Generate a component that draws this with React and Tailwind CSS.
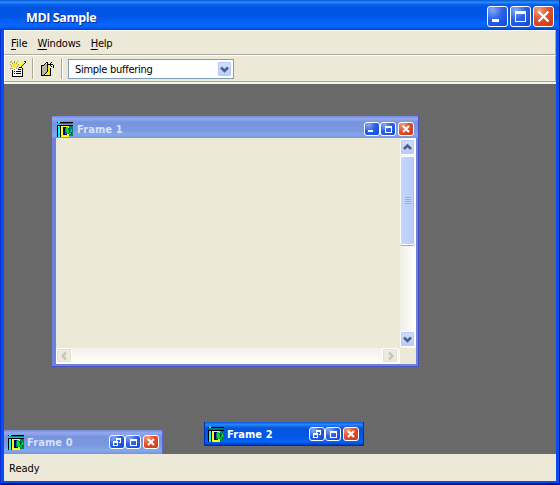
import React from "react";

const sizes = {
  main: "w-[21px] h-[21px] rounded-[3px]",
  child: "w-4 h-[14px] rounded-[3px]",
};

function CaptionButton({ kind, size = "child" }) {
  const color =
    kind === "close"
      ? "bg-[radial-gradient(circle_at_25%_15%,#f0a080,#e2512c_45%,#c43a16)]"
      : "bg-[radial-gradient(circle_at_25%_15%,#86a8f6,#2c62e6_45%,#0f48d8)]";
  const main = size === "main";
  return (
    <button className={`${sizes[size]} ${color} border border-white flex items-center justify-center shrink-0`}>
      {main ? (
        <svg width="19" height="19" viewBox="0 0 19 19" fill="none" stroke="#fff" className="shrink-0" shapeRendering={kind === "close" ? "auto" : "crispEdges"}>
          {kind === "min" && <path d="M4 13.5h7" strokeWidth="3" />}
          {kind === "max" && <><path d="M4.5 5v9.500h10V5" /><path d="M4 5.500h11" strokeWidth="3" /></>}
          {kind === "close" && <path d="M4.500 4.500l10 10M14.500 4.500l-10 10" strokeWidth="2.300" />}
        </svg>
      ) : (
        <svg width="14" height="12" viewBox="0 0 14 12" fill="none" stroke="#fff" className="shrink-0" shapeRendering={kind === "close" ? "auto" : "crispEdges"}>
          {kind === "min" && <path d="M3 8h5" strokeWidth="2" />}
          {kind === "max" && <><path d="M4.500 4v5.500h6V4" /><path d="M4 4h7" strokeWidth="2" /></>}
          {kind === "restore" && <path d="M6.500 5V2.500h4v4H9M6 3.500h5M3.500 5.500h4v4h-4zM3 6.500h5" />}
          {kind === "close" && <path d="M4 3l6 6M10 3L4 9" strokeWidth="2" />}
        </svg>
      )}
    </button>
  );
}

function FrameIcon() {
  return (
    <svg width="16" height="16" viewBox="0 0 16 16" shapeRendering="crispEdges" className="shrink-0">
      <path fill="#000" d="M0 1h16v1H0zM0 4h16v1H0zM3 5h1v11H3zM0 5h1v11H0z" />
      <path fill="#008080" d="M2 2h14v1H2zM11 5h5v10h-5z" />
      <path fill="#00ffff" d="M1 0h2v2H1zM1 5h2v11H1z" />
      <path fill="#ffff00" d="M4 5h8v11H4z" />
      <path fill="#000060" d="M6 6h5v1H6zM6 6h2v8H6zM6 13h4v1H6z" />
      <path fill="#008080" d="M8 7h4v6H8z" />
      <path fill="#00e030" d="M9 6h2v3h1v4h-2v-2H9zM11 13h3v-2h-1v1h-2zM14 8h1v3h-1zM13 10h1v2h-1z" />
      <path fill="#004020" d="M12 7h1v4h-1zM14 11h1v2h-1z" />
    </svg>
  );
}

function NewIcon() {
  return (
    <svg width="16" height="16" viewBox="0 0 16 16" shapeRendering="crispEdges">
      <path fill="#fff" d="M3 7h9v8H3z" />
      <path fill="#000" d="M2 9h1v7H2zM2 15h11v1H2zM12 7h1v9h-1zM9 6h3v1H9zM4 10h1v1H4zM6 10h5v1H6zM4 12h1v1H4zM6 12h5v1H6zM8 8h3v1H8z" />
      <path fill="#909080" d="M1 0h1v1H1zM4 0h1v2H4zM7 0h1v1H7zM0 3h1v1H0zM2 2h1v1H2zM6 2h1v1H6zM8 3h1v1H8zM1 5h1v1H1zM3 5h1v1H3zM5 5h1v1H5zM7 5h1v1H7zM0 7h1v1H0zM2 7h1v1H2zM4 7h1v2H4zM6 7h1v1H6zM8 7h1v1H8zM0 1h1v1H0zM3 3h1v1H3zM5 3h1v1H5z" />
      <path fill="#f8e820" d="M2 1h1v1H2zM3 2h1v1H3zM5 2h1v1H5zM6 1h1v1H6zM4 2h1v6H4zM1 4h8v1H1zM2 3h1v1H2zM6 3h1v1H6zM2 6h1v1H2zM3 5h3v1H3zM6 6h1v1H6zM1 7h1v1H1zM7 7h1v1H7zM3 3h3v2H3z" />
      <path fill="#ffff00" d="M12 1h2v2h-1v1h-1v1h-1v1H9V4h1V3h1V2h1z" />
      <path fill="#900000" d="M14 0h2v2h-1v1h-1v1h-1v1h-1v1h-1V5h1V4h1V3h1V2h1V1h-1z" />
    </svg>
  );
}

function ExitIcon() {
  return (
    <svg width="16" height="16" viewBox="0 0 16 16" shapeRendering="crispEdges">
      <path fill="#b8b4a0" d="M2 5h2V4h1V3h2v8H6v1H5v1H4v1H2z" />
      <path fill="#f8e820" d="M8 4h2v10H4v-1h1v-1h1v-1h2z" />
      <path fill="#000" d="M1 4h1v11H1zM2 4h2v1H2zM4 3h1v1H4zM5 2h1v1H5zM6 1h1v1H6zM7 1h1v10H7zM6 11h1v1H6zM5 12h1v1H5zM4 13h1v1H4zM2 14h9v1H2zM8 3h1v1H8zM10 7h1v7h-1z" />
      <path fill="#000" d="M9 3h1v1H9zM10 2h1v3h-1zM11 1h1v1h-1zM11 3h1v1h-1zM12 3h1v1h-1zM13 4h1v3h-1zM11 5h1v1h-1z" />
    </svg>
  );
}

const scrollSizes = {
  up: "w-[15px] h-4",
  down: "w-[15px] h-4",
  left: "w-4 h-[15px]",
  right: "w-4 h-[15px]",
};

function ScrollButton({ dir, disabled = false }) {
  const paths = {
    up: "M4 9l3.500-3.500L11 9",
    down: "M4 5.500L7.500 9 11 5.500",
    left: "M9 3.500L5.500 7 9 10.500",
    right: "M6 3.500L9.500 7 6 10.500",
  };
  return (
    <div className={`${scrollSizes[dir]} shrink-0 rounded-[2px] border border-white flex items-center justify-center ${disabled ? "bg-[#eeece1] shadow-[inset_0_0_0_1px_#e3e1d5]" : "bg-gradient-to-b from-[#d2defe] to-[#b9cdfb] shadow-[inset_0_0_0_1px_#b8cafa]"}`}>
      <svg width="15" height="14" viewBox="0 0 15 14" fill="none" className="shrink-0">
        <path d={paths[dir]} stroke={disabled ? "#c9c7ba" : "#4d6185"} strokeWidth="2.600" />
      </svg>
    </div>
  );
}

function FrameTitle({ title, active = false, middle, pad, gap = "ml-[3px]" }) {
  return (
    <div className={`flex items-center h-full ${pad} ${active ? "text-white" : "text-[#d6e1fa]"}`}>
      <FrameIcon />
      <span className={`${gap} pt-[2px] flex-1 whitespace-nowrap font-bold text-[11px] leading-[14px] tracking-[0.1px]`}>{title}</span>
      <div className="flex">
        <CaptionButton kind={middle} />
        <CaptionButton kind="max" />
        <span className="w-[2px]" />
        <CaptionButton kind="close" />
      </div>
    </div>
  );
}

const inactiveBar = "bg-[linear-gradient(#7187dc,#93a9ef_12%,#7894df_28%,#7b98e2_65%,#84a9e8_85%,#7b92df)]";
const activeBar = "bg-[linear-gradient(#0a55d8,#2c86fa_10%,#0455dc_25%,#0058e8_65%,#0066fb_82%,#0046cf_92%,#00228f)]";

export default function App() {
  return (
    <div className="w-[560px] h-[485px] overflow-hidden flex flex-col bg-[#0038d6] font-['DejaVu_Sans_Condensed','DejaVu_Sans',sans-serif] text-[11px] text-black">
      <header className="h-[30px] shrink-0 flex items-center pl-[26px] pr-[6px] pt-[3px] border-r border-[#0026b0] bg-[linear-gradient(#0a58d0,#2a8cff_8%,#0a65ee_14%,#0054e0_24%,#0055e5_55%,#0566ff_82%,#0462f6_90%,#0042c8)]">
        <h1 className="flex-1 font-['Open_Sans',sans-serif] font-bold text-[12.500px] leading-4 pt-[2px] tracking-[-0.400px] text-white [text-shadow:1px_1px_0_#0a2f90]">MDI Sample</h1>
        <div className="flex gap-[2px] -mr-px">
          <CaptionButton kind="min" size="main" />
          <CaptionButton kind="max" size="main" />
          <CaptionButton kind="close" size="main" />
        </div>
      </header>

      <div className="flex-1 min-h-0 flex flex-col border-l border-r border-b-2 border-l-[#0831d9] border-r-[#00138c] border-b-[#00138c]">
        <div className="flex-1 min-h-0 flex flex-col border-x-3 border-b-2 border-[#0a4cec]">
          <nav className="h-[25px] shrink-0 bg-[#ece9d8] border border-t-white border-l-white border-r-[#aca899] border-b-[#aca899] flex items-center gap-[10px] pl-[6px] pt-[3px]">
            <span><u className="underline-offset-2">F</u>ile</span>
            <span className="tracking-[-0.150px]"><u className="underline-offset-2">W</u>indows</span>
            <span className="tracking-[-0.200px]"><u className="underline-offset-2">H</u>elp</span>
          </nav>
          <div className="h-[27px] shrink-0 bg-[#ece9d8] border border-t-white border-l-white border-r-[#aca899] border-b-[#aca899] flex items-center pl-[5px]">
            <NewIcon />
            <span className="w-[2px] h-[21px] ml-[6px] bg-[#aca899] border-r border-white" />
            <span className="ml-[6px]"><ExitIcon /></span>
            <span className="w-[2px] h-[21px] ml-[5px] bg-[#aca899] border-r border-white" />
            <div className="ml-[5px] w-[166px] h-5 bg-white border border-[#7f9db9] flex items-center pl-[6px] pr-[1px]">
              <span className="flex-1 pt-[3px] tracking-[-0.280px]">Simple buffering</span>
              <ScrollButton dir="down" />
            </div>
          </div>
          <div className="h-[2px] shrink-0 bg-[#f5f3eb]" />

          <main className="relative flex-1 min-h-0 overflow-hidden bg-[#696969]">
            <section className="absolute left-[48px] top-[32px] w-[367px] h-[251px] flex flex-col bg-[#6f80df] border-r border-b border-[#4a52bd]">
              <div className={`h-[22px] shrink-0 pt-[4px] ${inactiveBar}`}>
                <FrameTitle title="Frame 1" middle="min" pad="pl-[5px] pr-1" gap="ml-1" />
              </div>
              <div className="flex-1 min-h-0 ml-1 mr-[2px] mb-[2px] flex flex-col bg-[#ece9d8]">
                <div className="flex-1 min-h-0 flex">
                  <div className="flex-1" />
                  <div className="w-4 flex flex-col items-start pt-[1px] pb-px bg-gradient-to-r from-[#f0efe7] to-white">
                    <ScrollButton dir="up" />
                    <div className="w-[15px] h-[89px] mt-[1px] rounded-[2px] border border-white bg-gradient-to-r from-[#c5d5fd] to-[#b9cdfb] shadow-[0_1px_0_#91aee4,inset_-1px_0_0_#a9c0f3] flex flex-col items-center justify-center gap-[1px]">
                      <span className="w-[6px] h-px bg-[#8cb0f8]" />
                      <span className="w-[6px] h-px bg-[#8cb0f8]" />
                      <span className="w-[6px] h-px bg-[#8cb0f8]" />
                      <span className="w-[6px] h-px bg-[#8cb0f8]" />
                    </div>
                    <div className="flex-1" />
                    <ScrollButton dir="down" />
                  </div>
                </div>
                <div className="h-4 mr-4 flex justify-between pr-[2px] bg-gradient-to-b from-[#f2f1ea] to-white">
                  <ScrollButton dir="left" disabled />
                  <ScrollButton dir="right" disabled />
                </div>
              </div>
            </section>

            <section className={`absolute left-0 top-[346px] w-[159px] h-[24px] border-r border-[#5e67cd] ${inactiveBar}`}>
              <FrameTitle title="Frame 0" middle="restore" pad="pl-1 pr-[3px]" />
            </section>
            <section className={`absolute left-[200px] top-[338px] w-[160px] h-[24px] border-x border-[#0030b8] ${activeBar}`}>
              <FrameTitle title="Frame 2" middle="restore" active pad="pl-[3px] pr-1" />
            </section>
          </main>

          <footer className="h-[27px] shrink-0 bg-[#ece9d8] flex items-center pl-[5px] pt-[3px]">Ready</footer>
        </div>
      </div>
    </div>
  );
}
